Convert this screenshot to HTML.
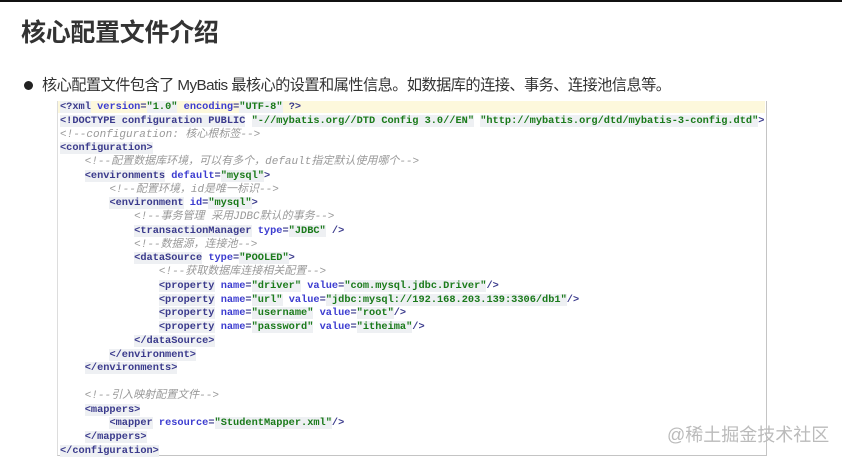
<!DOCTYPE html>
<html><head><meta charset="utf-8"><style>
body{margin:0;width:842px;height:458px;background:#fff;position:relative;overflow:hidden;font-family:"Liberation Sans","Noto Sans CJK SC",sans-serif}
.top{position:absolute;left:0;top:0;width:842px;height:2px;background:#111}
h1{position:absolute;left:21px;top:17px;margin:0;font-size:25px;font-weight:bold;color:#333;line-height:32px;letter-spacing:-0.3px}
.b{position:absolute;left:24px;top:81px;width:9px;height:9px;border-radius:50%;background:#222}
.t{position:absolute;left:42px;top:76px;font-size:15.2px;color:#333;line-height:20px;white-space:nowrap;letter-spacing:-0.55px}
.box{position:absolute;left:57px;top:101px;width:708px;height:354px;border:1px solid #c4c4c4;border-top:none;border-left:1px solid #ddd}
pre{position:absolute;left:60px;top:101px;margin:0;font-family:"Liberation Mono","Noto Sans CJK SC",monospace;font-size:10.3px;line-height:13.75px;font-weight:bold;color:#3a3a8c}
.l0{background:#fdf8dc;position:absolute;left:58px;top:101px;width:707px;height:12px}
.g{color:#999;font-style:italic;font-weight:normal;font-size:11px}
.a{color:#3c3cd0}
.s{color:#1a7a1a;background:#eef0f3}
.k{background:#eef0f3}
.wm{position:absolute;left:667px;top:421px;font-size:18px;color:#bbb;letter-spacing:0px}
</style></head><body>
<div class="top"></div>
<h1>核心配置文件介绍</h1>
<div class="b"></div>
<div class="t">核心配置文件包含了 MyBatis 最核心的设置和属性信息。如数据库的连接、事务、连接池信息等。</div>
<div class="l0"></div>
<div class="box"></div>
<pre><span class="k">&lt;?xml</span> <span class="a">version</span>=<span class="s">"1.0"</span> <span class="a">encoding</span>=<span class="s">"UTF-8"</span> ?&gt;
<span class="k">&lt;!DOCTYPE configuration PUBLIC</span> <span class="s">"-//mybatis.org//DTD Config 3.0//EN"</span> <span class="s">"http://mybatis.org/dtd/mybatis-3-config.dtd"</span>&gt;
<span class="g">&lt;!--configuration: 核心根标签--&gt;</span>
<span class="k">&lt;configuration&gt;</span>
    <span class="g">&lt;!--配置数据库环境，可以有多个，default指定默认使用哪个--&gt;</span>
    <span class="k">&lt;environments</span> <span class="a">default</span>=<span class="s">"mysql"</span>&gt;
        <span class="g">&lt;!--配置环境，id是唯一标识--&gt;</span>
        <span class="k">&lt;environment</span> <span class="a">id</span>=<span class="s">"mysql"</span>&gt;
            <span class="g">&lt;!--事务管理 采用JDBC默认的事务--&gt;</span>
            <span class="k">&lt;transactionManager</span> <span class="a">type</span>=<span class="s">"JDBC"</span> /&gt;
            <span class="g">&lt;!--数据源，连接池--&gt;</span>
            <span class="k">&lt;dataSource</span> <span class="a">type</span>=<span class="s">"POOLED"</span>&gt;
                <span class="g">&lt;!--获取数据库连接相关配置--&gt;</span>
                <span class="k">&lt;property</span> <span class="a">name</span>=<span class="s">"driver"</span> <span class="a">value</span>=<span class="s">"com.mysql.jdbc.Driver"</span>/&gt;
                <span class="k">&lt;property</span> <span class="a">name</span>=<span class="s">"url"</span> <span class="a">value</span>=<span class="s">"jdbc:mysql://192.168.203.139:3306/db1"</span>/&gt;
                <span class="k">&lt;property</span> <span class="a">name</span>=<span class="s">"username"</span> <span class="a">value</span>=<span class="s">"root"</span>/&gt;
                <span class="k">&lt;property</span> <span class="a">name</span>=<span class="s">"password"</span> <span class="a">value</span>=<span class="s">"itheima"</span>/&gt;
            <span class="k">&lt;/dataSource&gt;</span>
        <span class="k">&lt;/environment&gt;</span>
    <span class="k">&lt;/environments&gt;</span>

    <span class="g">&lt;!--引入映射配置文件--&gt;</span>
    <span class="k">&lt;mappers&gt;</span>
        <span class="k">&lt;mapper</span> <span class="a">resource</span>=<span class="s">"StudentMapper.xml"</span>/&gt;
    <span class="k">&lt;/mappers&gt;</span>
<span class="k">&lt;/configuration&gt;</span></pre>
<div class="wm">@稀土掘金技术社区</div>
</body></html>
